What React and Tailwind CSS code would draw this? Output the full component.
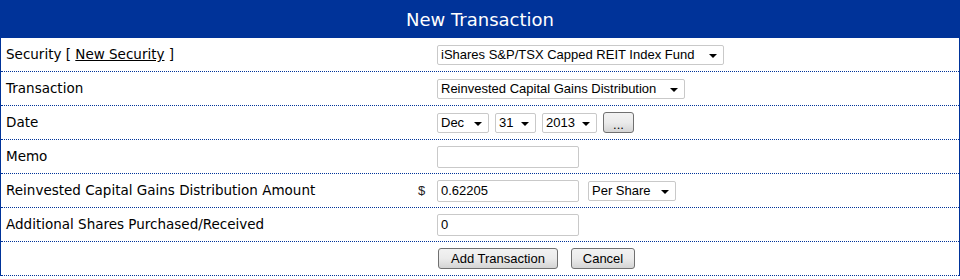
import React from 'react';

const labelFont = { fontFamily: '"DejaVu Sans", Verdana, sans-serif' };

function Select({ value, width }) {
  return (
    <span
      className="relative inline-flex items-center h-[20px] bg-white border border-[#c9c9c9] rounded-[2px] text-[13px] text-black pl-[3px] box-border"
      style={{ width }}
    >
      <span className="font-['Liberation_Sans',Arial,sans-serif] whitespace-nowrap">{value}</span>
      <span className="absolute right-[6px] top-[8px] w-0 h-0 border-l-[4px] border-r-[4px] border-t-[4px] border-l-transparent border-r-transparent border-t-black" />
    </span>
  );
}

function TextInput({ value }) {
  return (
    <input
      readOnly
      value={value}
      className="w-[142px] h-[22px] border border-[#c9c9c9] rounded-[2px] px-[3px] text-[13px] text-black font-['Liberation_Sans',Arial,sans-serif] outline-none box-border"
    />
  );
}

function Button({ children, className }) {
  return (
    <button
      className={`h-[21px] border border-[#707070] rounded-[3px] bg-gradient-to-b from-[#f2f2f2] via-[#ebebeb] to-[#d4d4d4] text-[13px] text-black font-['Liberation_Sans',Arial,sans-serif] leading-none ${className}`}
    >
      {children}
    </button>
  );
}

function Row({ label, dollar, children }) {
  return (
    <div className="grid grid-cols-[410px_26px_1fr] h-[34px] border-b border-dotted border-[#003399] items-center">
      <div className="pl-[5px] text-[13.5px] text-black" style={labelFont}>
        {label}
      </div>
      <div className="pl-[7px] text-[13px] text-[#222] font-['Liberation_Sans',Arial,sans-serif]">
        {dollar ? '$' : ''}
      </div>
      <div className="flex items-center">{children}</div>
    </div>
  );
}

export default function App() {
  return (
    <div className="w-[960px] h-[279px] bg-white">
      <div
        className="h-[38px] bg-[#003399] text-white text-[18px] flex items-center justify-center"
        style={labelFont}
      >
        New Transaction
      </div>
      <div className="border-x border-[#003399]">
        <Row
          label={
            <span>
              Security [ <a className="underline">New Security</a> ]
            </span>
          }
        >
          <Select value="iShares S&P/TSX Capped REIT Index Fund" width={287} />
        </Row>
        <Row label="Transaction">
          <Select value="Reinvested Capital Gains Distribution" width={248} />
        </Row>
        <Row label="Date">
          <div className="flex items-center gap-[6px]">
            <Select value="Dec" width={52} />
            <Select value="31" width={41} />
            <Select value="2013" width={55} />
            <Button className="w-[31px] text-[9px] pt-[4px]">...</Button>
          </div>
        </Row>
        <Row label="Memo">
          <TextInput value="" />
        </Row>
        <Row label="Reinvested Capital Gains Distribution Amount" dollar>
          <div className="flex items-center gap-[9px]">
            <TextInput value="0.62205" />
            <Select value="Per Share" width={88} />
          </div>
        </Row>
        <Row label="Additional Shares Purchased/Received">
          <TextInput value="0" />
        </Row>
        <Row label="">
          <div className="flex items-center gap-[13px] pl-[1px]">
            <Button className="w-[120px]">Add Transaction</Button>
            <Button className="w-[64px]">Cancel</Button>
          </div>
        </Row>
      </div>
    </div>
  );
}
